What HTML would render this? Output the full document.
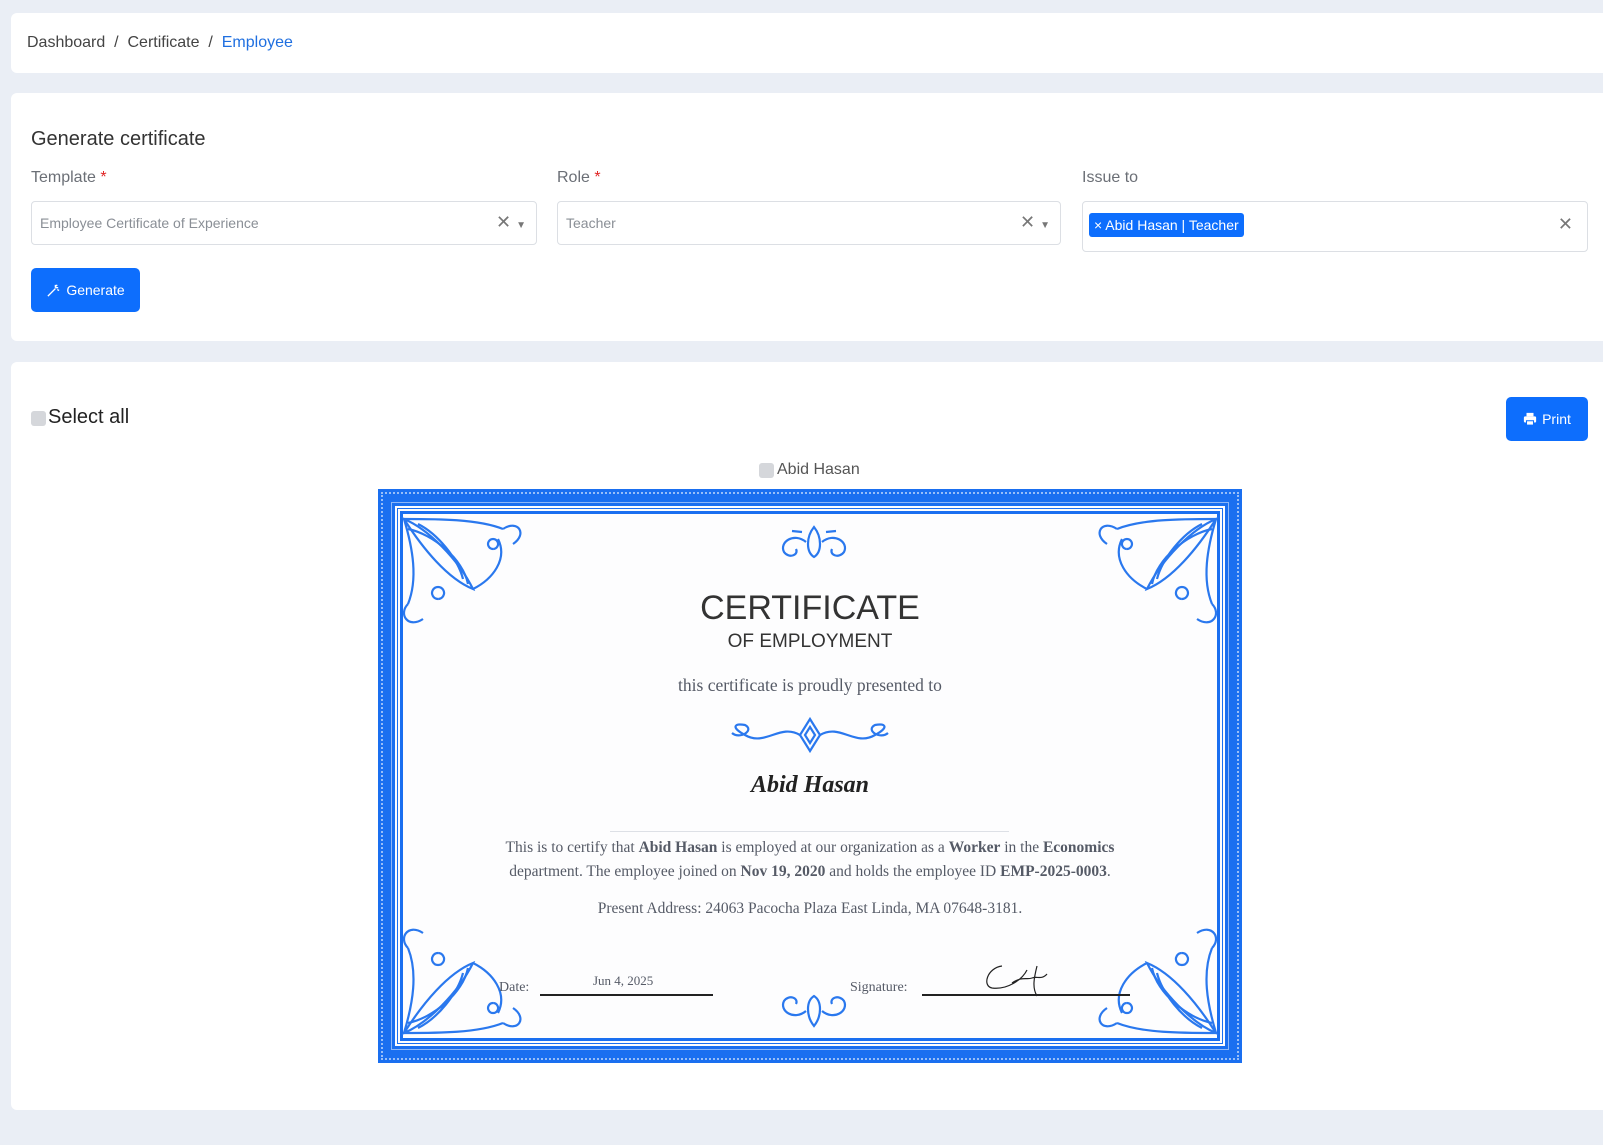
<!DOCTYPE html>
<html><head><meta charset="utf-8"><style>
*{box-sizing:border-box;margin:0;padding:0}
body{width:1603px;height:1145px;background:#eaeef5;font-family:"Liberation Sans",sans-serif;position:relative;overflow:hidden;color:#333}
.card{position:absolute;left:11px;right:0;background:#fff;border-radius:6px 0 0 6px}
.abs{position:absolute}
.lbl{position:absolute;font-size:16px;color:#6b6f76}
.lbl b{color:#e02424;font-weight:normal}
.inp{position:absolute;border:1px solid #dcdfe4;border-radius:4px;background:#fff;font-size:14px;color:#8a8f96}
.btn{position:absolute;background:#0d6efd;color:#fff;border-radius:5px;font-size:14px;display:flex;align-items:center;justify-content:center;gap:5px}
.chk{position:absolute;width:15px;height:15px;background:#d5d7db;border-radius:3px}
.serif{font-family:"Liberation Serif",serif;color:#555a66}
</style></head><body>
<div class="card" style="top:13px;height:60px"></div>
<div class="abs" style="left:27px;top:34px;font-size:16px;color:#444">Dashboard &nbsp;/&nbsp; Certificate &nbsp;/&nbsp; <span style="color:#1f6fe0">Employee</span></div>

<div class="card" style="top:93px;height:248px"></div>
<div class="abs" style="left:31px;top:128px;font-size:20px;color:#333">Generate certificate</div>
<div class="lbl" style="left:31px;top:169px">Template <b>*</b></div>
<div class="lbl" style="left:557px;top:169px">Role <b>*</b></div>
<div class="lbl" style="left:1082px;top:169px">Issue to</div>
<div class="inp" style="left:31px;top:201px;width:506px;height:44px;padding:13px 8px">Employee Certificate of Experience<span style="position:absolute;right:10px;top:10px;color:#777;font-size:18px">✕ <span style="font-size:10px">▼</span></span></div>
<div class="inp" style="left:557px;top:201px;width:504px;height:44px;padding:13px 8px">Teacher<span style="position:absolute;right:10px;top:10px;color:#777;font-size:18px">✕ <span style="font-size:10px">▼</span></span></div>
<div class="inp" style="left:1082px;top:201px;width:506px;height:51px"><span style="position:absolute;left:6px;top:11px;background:#0d6efd;color:#fff;border-radius:3px;font-size:14px;padding:4px 5px 4px 5px">× Abid Hasan | Teacher</span><span style="position:absolute;right:14px;top:12px;color:#777;font-size:18px">✕</span></div>
<div class="btn" style="left:31px;top:268px;width:109px;height:44px"><svg width="15" height="15" viewBox="0 0 16 16" fill="none" stroke="#fff" stroke-width="1.4"><path d="M2 14L10 6M10 2v3M13 5h-3M12 2l-1.5 1.5M14 8l-2-1"/></svg>Generate</div>

<div class="card" style="top:362px;height:748px"></div>
<div class="chk" style="left:31px;top:411px"></div>
<div class="abs" style="left:48px;top:406px;font-size:20px;color:#222">Select all</div>
<div class="btn" style="left:1506px;top:397px;width:82px;height:44px"><svg width="14" height="14" viewBox="0 0 16 16" fill="#fff"><rect x="4" y="1" width="8" height="4"/><rect x="1" y="5" width="14" height="7" rx="1.5"/><rect x="4" y="10" width="8" height="5" fill="#fff" stroke="#0d6efd" stroke-width="1.2"/></svg>Print</div>
<div class="chk" style="left:759px;top:463px"></div>
<div class="abs" style="left:777px;top:461px;font-size:16px;color:#555">Abid Hasan</div>

<div class="abs" style="left:378px;top:489px;width:864px;height:574px;background:#1a6ff0;padding:17px">
 <div style="position:absolute;inset:3px;border:2px dotted rgba(255,255,255,.55)"></div>
 <div style="position:absolute;inset:13px;border:1px solid rgba(255,255,255,.5)"></div>
 <div style="width:100%;height:100%;background:#fdfdfe;padding:5px">
  <div style="width:100%;height:100%;border:3px solid #1a6ff0;outline:1px solid #1a6ff0;outline-offset:2px"></div>
 </div>
</div>
<svg class="abs" style="left:378px;top:489px" width="864" height="574" fill="none" stroke="#2a78ee" stroke-width="2.2">
 <g id="c"><path d="M26 30C50 40 80 70 95 100C70 90 45 60 26 30Z"/><path d="M26 30C35 60 40 90 30 115"/><path d="M26 30C60 30 100 30 125 40"/><path d="M30 40C55 45 85 70 90 95M40 35C60 45 80 70 85 90"/><path d="M95 100C115 90 130 70 120 50M125 40C140 30 150 45 135 55"/><path d="M30 115C20 125 30 140 45 130M60 110a6 6 0 1 1 0.1 0M115 60a5 5 0 1 1 0.1 0"/></g>
 <use href="#c" transform="translate(864 0) scale(-1 1)"/>
 <use href="#c" transform="translate(0 574) scale(1 -1)"/>
 <use href="#c" transform="translate(864 574) scale(-1 -1)"/>
 <g transform="translate(436 48)"><path d="M0 -10C-8 0 -8 15 0 20C8 15 8 0 0 -10Z"/><path d="M-8 5C-20 -5 -35 5 -30 15C-25 22 -15 18 -18 12M8 5C20 -5 35 5 30 15C25 22 15 18 18 12"/><path d="M-12 -5L-22 -6M12 -5L22 -6"/></g>
 <g transform="translate(436 527) scale(1 -1)"><path d="M0 -10C-8 0 -8 15 0 20C8 15 8 0 0 -10Z"/><path d="M-8 5C-20 -5 -35 5 -30 15C-25 22 -15 18 -18 12M8 5C20 -5 35 5 30 15C25 22 15 18 18 12"/></g>
 <g transform="translate(432 246)"><path d="M0 -16L10 0L0 16L-10 0Z M0 -8L5 0L0 8L-5 0Z"/><path d="M-10 0C-30 -12 -45 12 -65 0C-80 -8 -75 -12 -65 -10C-55 -5 -70 5 -78 -2M10 0C30 -12 45 12 65 0C80 -8 75 -12 65 -10C55 -5 70 5 78 -2"/></g>
</svg>
<div class="abs" style="left:378px;width:864px;top:589px;text-align:center;font-size:34px;color:#333">CERTIFICATE</div>
<div class="abs" style="left:378px;width:864px;top:631px;text-align:center;font-size:19px;color:#333">OF EMPLOYMENT</div>
<div class="abs serif" style="left:378px;width:864px;top:675px;text-align:center;font-size:17.5px">this certificate is proudly presented to</div>
<div class="abs" style="left:378px;width:864px;top:772px;text-align:center;font-size:24px;font-family:'Liberation Serif',serif;font-style:italic;font-weight:bold;color:#222">Abid Hasan</div>
<div class="abs" style="left:610px;top:831px;width:399px;height:1px;background:#dde0e6"></div>
<div class="abs serif" style="left:378px;width:864px;top:836px;text-align:center;font-size:15.5px;line-height:24px">This is to certify that <b>Abid Hasan</b> is employed at our organization as a <b>Worker</b> in the <b>Economics</b><br>department. The employee joined on <b>Nov 19, 2020</b> and holds the employee ID <b>EMP-2025-0003</b>.</div>
<div class="abs serif" style="left:378px;width:864px;top:900px;text-align:center;font-size:15.5px">Present Address: 24063 Pacocha Plaza East Linda, MA 07648-3181.</div>
<div class="abs serif" style="left:499px;top:980px;font-size:14px">Date:</div>
<div class="abs serif" style="left:593px;top:973px;font-size:13px">Jun 4, 2025</div>
<div class="abs" style="left:540px;top:994px;width:173px;height:1.5px;background:#222"></div>
<div class="abs serif" style="left:850px;top:980px;font-size:14px">Signature:</div>
<svg class="abs" style="left:982px;top:958px" width="80" height="40" fill="none" stroke="#222" stroke-width="1.2"><path d="M20 8C5 10 0 28 10 30C25 32 40 22 45 12M30 25C40 18 45 22 50 20C55 18 60 22 65 16M55 8C52 20 50 30 55 38"/></svg>
<div class="abs" style="left:922px;top:994px;width:208px;height:1.5px;background:#222"></div>
</body></html>
